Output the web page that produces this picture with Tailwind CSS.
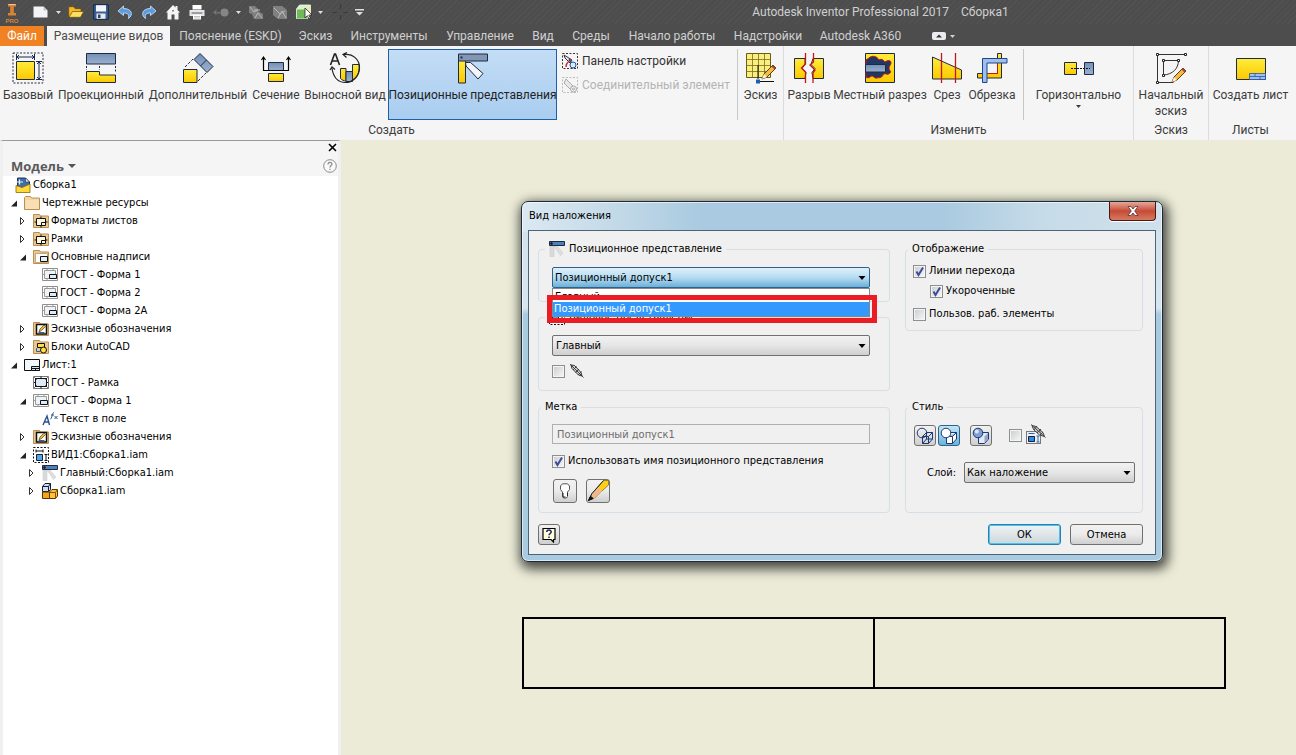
<!DOCTYPE html>
<html lang="ru">
<head>
<meta charset="utf-8">
<title>Autodesk Inventor Professional 2017 Сборка1</title>
<script src="https://cdn.jsdelivr.net/npm/@tailwindcss/browser@4"></script>
</head>
<body class="flex h-screen flex-col overflow-hidden bg-[#ebebd7] font-['Roboto','Open_Sans',sans-serif] text-[12px] leading-4 text-[#3c3c3c]">

<!-- Shared icons -->
<svg class="absolute size-0" aria-hidden="true">
  <symbol id="i-folder" viewBox="0 0 16 16"><path d="M.5 14.500V2.500l1-1h5l1 1.500h8v11.500z" fill="#f3d6a2" stroke="#b98f52"/><path d="M1.500 5h13.500v9H1.500z" fill="#f8e0b4"/></symbol>
  <symbol id="i-folder-frame" viewBox="0 0 16 16"><path d="M.5 14.500V1.500h6l1 1.500h8v11.500z" fill="#e9c890" stroke="#b98f52"/><path d="M3.500 5.500h9v7h-9z" fill="#fff6df" stroke="#111"/><path d="M1.500 9h2M12.500 9h2M8 3.500v2M8 12.500v2M8.500 9.500h4M8.500 9.500v3" stroke="#111" fill="none"/></symbol>
  <symbol id="i-folder-title" viewBox="0 0 16 16"><path d="M.5 14.500V1.500h6l1 1.500h8v11.500z" fill="#e9c890" stroke="#b98f52"/><path d="M2.500 4.500h12v9h-12z" fill="#fff"  stroke="#c3a87a"/><path d="M7.500 7.500h7v5h-7z" fill="#e5effa" stroke="#111"/></symbol>
  <symbol id="i-title" viewBox="0 0 16 16"><path d="M.5 1.500h15v12H.5z" fill="#fff" stroke="#8f8f8f"/><path d="M2.500 3.500h11v8h-11zM5 1.500v2M11 1.500v2M.5 7.500h2M5 11.500v2" fill="#eef3f8" stroke="#9a9a9a"/><path d="M7.500 7.500h7v4h-7z" fill="#dceafa" stroke="#111"/></symbol>
  <symbol id="i-frame" viewBox="0 0 16 16"><path d="M.5 1.500h15v12H.5z" fill="#fff" stroke="#777"/><path d="M2.500 3.500h11v8h-11z" fill="#dceaf8" stroke="#111"/><path d="M8 1.500v2M8 11.500v2M1 7.500h2M13 7.500h2M1.500 2.500l2 2M14.500 2.500l-2 2M1.500 12.500l2-2M14.500 12.500l-2-2" stroke="#111" fill="none"/></symbol>
  <symbol id="i-folder-sketch" viewBox="0 0 16 16"><path d="M.5 14.500V1.500h6l1 1.500h8v11.500z" fill="#e9c890" stroke="#b98f52"/><path d="M3.500 3.500v9.500h10V3.500z" fill="#fff" stroke="#111" stroke-width="1.500"/><path d="M6 11l1-3 4-4 1.500 1.500-4 4z" fill="#f2b82e" stroke="#5a4310" stroke-width=".7"/><path d="M5.500 11.500h6" stroke="#2d62a8"/></symbol>
  <symbol id="i-folder-acad" viewBox="0 0 16 16"><path d="M.5 14.500V1.500h6l1 1.500h8v11.500z" fill="#e9c890" stroke="#b98f52"/><path d="M4.500 4.500h7v4h-7z" fill="#ffe04a" stroke="#111"/><circle cx="10.500" cy="11" r="3" fill="#ffe04a" stroke="#111"/><path d="M3.500 9v3.500h4" fill="none" stroke="#2d62a8"/></symbol>
  <symbol id="i-sheet" viewBox="0 0 16 16"><path d="M.5 2.500h15v11H.5z" fill="#f2f7fd" stroke="#111"/><path d="M7.500 9.500h8v4h-8zM7.500 11.500h8M11.500 11.500v2" fill="#cfe0f2" stroke="#111"/></symbol>
  <symbol id="i-text" viewBox="0 0 16 16"><path d="M1 14l4-9 2.500 9M2.500 11h4.500" fill="none" stroke="#28508c" stroke-width="1.400"/><path d="M8.500 8c1.500 0 1.500-6.500 3.500-6.500M9 4h3M12.500 5l3 3M15.500 5l-3 3" fill="none" stroke="#28508c"/></symbol>
  <symbol id="i-view" viewBox="0 0 16 16"><path d="M.5 .5h15v15H.5z" fill="#fff" stroke="#111" stroke-dasharray="2 1.500"/><path d="M3.500 7.500h6v6h-6z" fill="#58a2e8" stroke="#123"/><path d="M3 2.500v3M10 2.500v3M3 4h7M11.500 7.500h3M11.500 13.500h3M13 7.500v6" fill="none" stroke="#111"/></symbol>
  <symbol id="i-pos" viewBox="0 0 16 16"><path d="M1 5h4v10.500H1z" fill="#dadada" stroke="#c4c4c4" stroke-width=".5"/><path d="M5 5h3l6 7-2.500 2.500z" fill="#dedede" stroke="#c4c4c4" stroke-width=".5"/><path d="M.5 .5h15v4H.5z" fill="#4f7fb5" stroke="#182a44"/><circle cx="2.500" cy="2.500" r="1.200" fill="#111"/></symbol>
  <symbol id="i-asm" viewBox="0 0 16 16"><path d="M.5 3.500l2.500-3h5.500v6l-2 2h-6z" fill="#cfe0f4" stroke="#111c33"/><path d="M.5 3.500h6l2-3M6.500 3.500v5" stroke="#111c33" fill="none"/><path d="M.5 9h7v6.500h-7z" fill="#f4a51c" stroke="#5a3300"/><path d="M7.500 9l2.500-2.500h5.500V13l-2 2.500h-6z" fill="#ffc33c" stroke="#5a3300"/><path d="M7.500 9.500h6l2-3M13.500 9.500v6" fill="none" stroke="#8a5200"/></symbol>
  <symbol id="i-link" viewBox="0 0 16 16"><path d="M2 2l3.500.5L12 9.500l1 3.500-3.500-1L3 5.500z" fill="#bbb" fill-opacity=".5" stroke="#333"/><path d="M1 1l13.500 13.500M4 7l3.500-3.500M6.500 9.500L10 6M9 12l3.500-3.500" stroke="#333" stroke-width=".9"/></symbol>
  <symbol id="i-caret" viewBox="0 0 5 3"><path d="M0 0h5L2.500 3z" fill="currentColor"/></symbol>
  <symbol id="i-drop" viewBox="0 0 8 5"><path d="M.5 0h7L4 4z" fill="#000"/></symbol>
  <symbol id="i-closed" viewBox="0 0 8 10"><path d="M1.500 1.500v7l3.500-3.500z" fill="#fff" stroke="#333"/></symbol>
  <symbol id="i-open" viewBox="0 0 8 10"><path d="M7 2.500v6H1z" fill="#222"/></symbol>
  <linearGradient id="gy" x2="0" y2="1"><stop stop-color="#ffec3c"/><stop offset="1" stop-color="#fcc800"/></linearGradient>
  <linearGradient id="gb" x2="0" y2="1"><stop stop-color="#7190b8"/><stop offset="1" stop-color="#9db0cc"/></linearGradient>
</svg>

<header class="shrink-0 bg-[#4d4d4d] text-[#d0d0d0]">
  <!-- Title bar with quick access tools -->
  <div class="flex h-6 items-center bg-[repeating-linear-gradient(135deg,#4d4d4d_0px,#4d4d4d_3px,#525252_3px,#525252_4px)]">
    <button aria-label="Меню приложения" class="w-[31px] pl-1"><svg class="h-[22px] w-4" viewBox="0 0 16 22"><path d="M4 3h8v2.500H9.800v6.500H12v2.500H4V12h2.200V5.500H4z" fill="#d98434"/><path d="M4 3h8l-1 1H5z" fill="#f7c48c"/><text x="8" y="21.500" text-anchor="middle" font-family="Liberation Sans" font-size="6" font-weight="700" fill="#d98434">PRO</text></svg></button>
    <button aria-label="Создать" class="w-[23px] pl-px"><svg class="size-4" viewBox="0 0 16 16"><path d="M1.500 2.500h10l4 4v7h-14z" fill="#f4f4f6"/><path d="M11.500 2.500v4h4z" fill="#bfc1c8"/></svg></button>
    <button aria-label="Список" class="w-[14px] pl-0.5 text-[#e0e0e0]"><svg class="h-[3px] w-[5px]"><use href="#i-caret"/></svg></button>
    <button aria-label="Открыть" class="w-[25px]"><svg class="size-4" viewBox="0 0 16 16"><path d="M.7 13V2.700h5l1.500 2H13v3" fill="#f4b926" stroke="#6a4b0a" stroke-width=".7"/><path d="M1 13.300l3.500-5.800h11.200L12.500 13.300z" fill="#ffdf62" stroke="#6a4b0a" stroke-width=".7"/></svg></button>
    <button aria-label="Сохранить" class="w-[24px]"><svg class="size-4" viewBox="0 0 16 16"><path d="M.7.700h14.600v14.600H.7z" fill="#3c5f92" stroke="#12294c"/><path d="M3 1.200h10v6.300H3z" fill="#f3f5fa"/><path d="M3.500 9.500h9v5.300h-9z" fill="#e9e9ee"/><path d="M5 10.500h2.500v3.500H5z" fill="#26426e"/></svg></button>
    <button aria-label="Отменить" class="w-[24px]"><svg class="size-4" viewBox="0 0 16 16"><path d="M6.500 2L1 7l5.500 4.500V9c4 0 6 1 5 5.500 5-3.500 3.500-10-5-10z" fill="#5b9be0" stroke="#d6e8fc" stroke-width=".8"/></svg></button>
    <button aria-label="Повторить" class="w-[24px]"><svg class="size-4" viewBox="0 0 16 16"><path d="M9.500 2L15 7l-5.500 4.500V9c-4 0-6 1-5 5.500-5-3.500-3.500-10 5-10z" fill="#5b9be0" stroke="#d6e8fc" stroke-width=".8"/></svg></button>
    <button aria-label="Главная" class="w-[24px]"><svg class="size-4" viewBox="0 0 16 16"><path d="M8 1L1 8.500h1.500V15.500h4v-5h3v5h4V8.500H15L12.500 6V2h-2v1.500z" fill="#f5f5f7"/><path d="M7 6h2v1.500H7z" fill="#888"/></svg></button>
    <button aria-label="Печать" class="w-[24px]"><svg class="size-4" viewBox="0 0 16 16"><path d="M3.500 1h9v4.500h-9z" fill="#fff"/><path d="M.5 6h15v6h-15z" fill="#e7e7ea"/><path d="M2.500 8.500h11v1h-11z" fill="#55555a"/><path d="M4 11h8v4.500H4z" fill="#fff"/><path d="M5 12.500h6M5 14h6" stroke="#999" stroke-width=".6"/></svg></button>
    <button aria-label="Назад" class="w-[22px]"><svg class="size-4" viewBox="0 0 16 16"><path d="M0 8.500l3.500-3V11zM4 8h3v1.500H4z" fill="#757575"/><circle cx="11.500" cy="8.500" r="4" fill="#858585"/></svg></button>
    <button aria-label="Список" class="w-[13px] pl-px text-[#e0e0e0]"><svg class="h-[3px] w-[5px]"><use href="#i-caret"/></svg></button>
    <button aria-label="Обновить" class="w-[24px]"><svg class="size-4" viewBox="0 0 16 16"><path d="M1 2h6l3 3v2l5 3v5H6l-2-5-3-1z" fill="#808080"/><path d="M2 3l4 5 4-2M7 14l3-5 4 5M6 6h6" fill="none" stroke="#b8b8b8"/></svg></button>
    <button aria-label="Обновить все" class="w-[24px]"><svg class="size-4" viewBox="0 0 16 16"><path d="M1 2h9l5 4v9H6l-5-4z" fill="#808080"/><path d="M2 4l6 6 5-3M6 14l4-7 4 7" fill="none" stroke="#b8b8b8"/></svg></button>
    <button aria-label="Выбор" class="w-[21px]"><svg class="size-4" viewBox="0 0 16 16"><path d="M.5 5l3-4h11v9.500l-3 4H.5z" fill="#d9f2c8" stroke="#f0f8ea" stroke-width=".8"/><path d="M1 5.500h10v9H1z" fill="#6fbb58"/><path d="M11.500 5v9.500l3-4V1z" fill="#f0e6b0"/><path d="M9 4v10l2.300-2.300L13 15l1.500-.7-1.700-3.300H16z" fill="#fff" stroke="#111" stroke-width=".7"/></svg></button>
    <button aria-label="Список" class="w-[15px] pl-px text-[#e0e0e0]"><svg class="h-[3px] w-[5px]"><use href="#i-caret"/></svg></button>
    <button aria-label="Центр" class="w-[23px]"><svg class="size-4" viewBox="0 0 16 16"><path d="M0 8.500h5M11 8.500h5M8.500 0v5M8.500 11v5" stroke="#3a3a3a" stroke-width="1.200"/></svg></button>
    <button aria-label="Настройка панели" class="w-[10px] text-[#e0e0e0]"><svg class="h-[7px] w-[9px]" viewBox="0 0 9 7"><path d="M0 0h9v1.500H0zM1 3h7L4.500 6.500z" fill="currentColor"/></svg></button>
    <h1 class="flex flex-1 justify-center gap-3 whitespace-nowrap pl-[100px]"><span>Autodesk Inventor Professional 2017</span><span>Сборка1</span></h1>
  </div>
  <!-- Ribbon tabs -->
  <nav class="flex h-[22px] items-end whitespace-nowrap *:h-5 *:leading-5">
    <button class="mr-[3px] w-11 bg-[#f08223] text-white">Файл</button>
    <button class="mr-px w-[123px] bg-[#f5f5f5] text-[#4a4a4a]">Размещение видов</button>
    <button class="w-[119px]">Пояснение (ESKD)</button>
    <button class="w-[51px]">Эскиз</button>
    <button class="w-[96px]">Инструменты</button>
    <button class="w-[86px]">Управление</button>
    <button class="w-[40px]">Вид</button>
    <button class="w-[56px]">Среды</button>
    <button class="w-[106px]">Начало работы</button>
    <button class="w-[86px]">Надстройки</button>
    <button class="w-[99px]">Autodesk A360</button>
    <button aria-label="Свернуть ленту" class="flex items-center gap-1 pl-[22px]"><svg class="h-2 w-[14px]" viewBox="0 0 14 8"><rect width="14" height="8" rx="2" fill="#ececf0"/><path d="M4 5.500h6L7 2.500z" fill="#333"/></svg><svg class="h-[3px] w-[5px]"><use href="#i-caret"/></svg></button>
  </nav>
</header>

<!-- Ribbon -->
<section class="flex h-[94px] shrink-0 whitespace-nowrap bg-[#f5f5f5]">
  <div class="flex w-[784px] shrink-0 flex-col border-r border-[#dcdcdc] pt-[3px]">
    <div class="flex h-[72px] *:shrink-0">
      <button class="flex w-14 flex-col items-center gap-[3px] pt-[3px]"><svg class="size-8" viewBox="0 0 32 32"><path d="M1 1h30v30H1z" fill="none" stroke="#222c40" stroke-dasharray="2 1.500"/><path d="M4.500 9.500h18v18h-18z" fill="url(#gy)" stroke="#1c2b45"/><path d="M4.500 2v6M22.500 2v6M5 5h17M24 9.500h6M24 27.500h6M27 10v17M7 3L5 5l2 2M20 3l2 2-2 2M25 12l2-2 2 2M25 25l2 2 2-2" fill="none" stroke="#1c2b45"/></svg>Базовый</button>
      <button class="flex w-[90px] flex-col items-center gap-[3px] pt-[3px]"><svg class="size-8" viewBox="0 0 32 32"><path d="M1.500 1.500h29v10.500h-29z" fill="url(#gb)" stroke="#1c2b45"/><path d="M1.500 14v4M14.500 14v4M30.500 14v6" stroke="#1c2b45" stroke-dasharray="2 1.500"/><path d="M1.500 19.500h13V23h16v7.500h-29z" fill="url(#gy)" stroke="#1c2b45"/></svg>Проекционный</button>
      <button class="flex w-[104px] flex-col items-center gap-[3px] pt-[3px]"><svg class="size-8" viewBox="0 0 32 32"><path d="M18 1.500l13 13-6 6-13-13z" fill="url(#gb)" stroke="#1c2b45"/><path d="M24.500 8l-6 6" stroke="#1c2b45"/><path d="M3 15L11 7M16 29l8-8" stroke="#1c2b45" stroke-dasharray="3 1.500"/><path d="M1.500 17.500h13.500v13H1.500z" fill="url(#gy)" stroke="#1c2b45"/></svg>Дополнительный</button>
      <button class="flex w-[52px] flex-col items-center gap-[3px] pt-[3px]"><svg class="size-8" viewBox="0 0 32 32"><path d="M8.500 10.500h15v8h-15z" fill="url(#gb)" stroke="#1c2b45"/><path d="M8.500 21.500h15v8h-15z" fill="url(#gy)" stroke="#1c2b45"/><path d="M3.500 6v12.500h25V6M1.500 8l2-3 2 3M26.500 8l2-3 2 3" fill="none" stroke="#000" stroke-width="1.200"/></svg>Сечение</button>
      <button class="flex w-[86px] flex-col items-center gap-[3px] pt-[3px]"><svg class="size-8" viewBox="0 0 32 32"><path d="M11.500 16.500h5.500v12.500c-2 0-4-1-5.500-2.500zM23.500 12.500h6.500c1 8-2 13-6.500 15.500z" fill="url(#gy)" stroke="#1c2b45"/><path d="M17 19.500h6.500v10H17z" fill="url(#gb)" stroke="#1c2b45"/><path d="M1.500 13L5.500 2h1l4 11M3 9h6" fill="none" stroke="#222" stroke-width="1.600"/><path d="M15 2.500c9-1 15.500 5 15.500 13 0 10-8 15-14 15-7 0-12-5-13.500-14M18 .5l-4 2 3.500 3M1 18l2-3 3 2.500" fill="none" stroke="#222" stroke-width="1.200"/></svg>Выносной вид</button>
      <button class="flex w-[169px] flex-col items-center gap-[3px] border border-[#1e5fa8] bg-linear-to-b from-[#c3ddf5] to-[#a9cdf0] pt-[2px] text-[#222]"><svg class="size-8" viewBox="0 0 32 32"><path d="M1.500 8.500h7V31h-7z" fill="url(#gy)" stroke="#1c2b45"/><path d="M8.500 10.500h5L26 21.500 21 27 9 14z" fill="#f2f4f9" stroke="#1c2b45"/><path d="M1.500 2h29v7h-29z" fill="#8397b5" stroke="#1c2b45"/><path d="M3.500 4.500h2v2h-2z" fill="#1c2b45"/></svg>Позиционные представления</button>
      <div class="flex w-[180px] flex-col gap-2 pl-[5px] pt-1">
        <button class="flex items-center gap-1 text-[#333]"><svg class="size-4 shrink-0" viewBox="0 0 16 16"><path d="M.5.500h15v15H.5z" fill="none" stroke="#333" stroke-dasharray="2 1.500"/><path d="M2 2l8 5-2 3-5-5z" fill="#eee" stroke="#333"/><path d="M4 14c0-5 3-5 5-8" fill="none" stroke="#d02828" stroke-width="1.400"/><path d="M7 6l4 7" stroke="#1c4f9c" stroke-width="1.400"/><circle cx="11" cy="12" r="3" fill="#dce9f8" stroke="#1c4f9c"/></svg>Панель настройки</button>
        <button disabled class="flex items-center gap-1 text-[#b4b4b4]"><svg class="size-4 shrink-0" viewBox="0 0 16 16"><path d="M.5.500h15v15H.5z" fill="none" stroke="#bbb" stroke-dasharray="2 1.500"/><path d="M4 2l7 7-3 3-6-6z" fill="#e8e8e8" stroke="#aaa"/><circle cx="11.500" cy="12" r="3" fill="#f3f3f3" stroke="#aaa"/><circle cx="11.500" cy="12" r="1" fill="none" stroke="#aaa"/></svg>Соединительный элемент</button>
      </div>
      <button class="flex w-[46px] flex-col items-center gap-[3px] border-l border-[#c8c8c8] pt-[3px]"><svg class="size-8" viewBox="0 0 32 32"><path d="M1.500 1.500h24v24h-24z" fill="#f9ee7e" stroke="#6b5d14"/><path d="M1.500 7.500h24M1.500 13.500h24M1.500 19.500h24M7.500 1.500v24M13.500 1.500v24M19.500 1.500v24" stroke="#7a6b20" stroke-width=".8"/><path d="M13 13v14M13 29.500h16" stroke="#111"/><path d="M11 27.500h4v4h-4z" fill="#1b5fb5"/><path d="M17 27l2-5 9-9 3 3-9 9z" fill="#f3bb42" stroke="#5c3c0c"/><path d="M17 27l2-5 3 3z" fill="#fff5e0"/><path d="M26.500 14.500l1.500-1.500 3 3-1.500 1.500z" fill="#a54632"/></svg>Эскиз</button>
    </div>
    <div class="text-center leading-5">Создать</div>
  </div>
  <div class="flex w-[350px] shrink-0 flex-col border-r border-[#dcdcdc] pt-[3px]">
    <div class="flex h-[72px] *:shrink-0">
      <button class="flex w-[50px] flex-col items-center gap-[3px] pt-[3px]"><svg class="size-8" viewBox="0 0 32 32"><path d="M1.500 6.500H12v6l-3 4 4 4-1 6H1.500zM20 6.500h10.500v20H20l-1-6 3-4-4-4z" fill="url(#gy)" stroke="#1c2b45"/><path d="M12.500 1v11l-4 4 4 4v11M20.500 1v9l-3.500 3 5 5-2 3v10" fill="none" stroke="#c4161c" stroke-width="1.300"/></svg>Разрыв</button>
      <button class="flex w-[92px] flex-col items-center gap-[3px] pt-[3px]"><svg class="size-8" viewBox="0 0 32 32"><path d="M1.500 1.500h29v29h-29z" fill="url(#gy)" stroke="#1c2b45"/><path d="M2 8l3-2c3-3 8-2 10 2 3-2 5 1 6 2 3-2 6-2 6 1 0 2-2 3-2 5 0 3 3 3 1 5-3 3-5-1-7 2-2 4-4 2-6 3-3 1-4-4-7-1-1 1-3 1-4 0z" fill="#213862" stroke="#c4161c"/><path d="M1.500 12.500h20v7.500h-20z" fill="url(#gb)" stroke="#1c2b45"/></svg>Местный разрез</button>
      <button class="flex w-[42px] flex-col items-center gap-[3px] pt-[3px]"><svg class="size-8" viewBox="0 0 32 32"><path d="M1.500 5l29 13v9h-29z" fill="url(#gy)" stroke="#1c2b45"/><path d="M10.500 1v30M24.500 1v30" stroke="#c4161c" stroke-width="1.300"/></svg>Срез</button>
      <button class="flex w-[48px] flex-col items-center gap-[3px] pt-[3px]"><svg class="size-8" viewBox="0 0 32 32"><path d="M21.500 1.500h4V26h-24v-4.500h20z" fill="url(#gy)" stroke="#1c2b45"/><path d="M11 21.500h10.500V11" fill="none" stroke="#c4161c"/><path d="M6.500 30.500v-24h24.500v4.500H11v19.500z" fill="#9dc0f0" stroke="#1f448a"/></svg>Обрезка</button>
      <div class="ml-[7px] w-[110px] border-l border-[#c8c8c8]"><button class="flex h-full w-full flex-col items-center pt-[3px]"><svg class="size-8" viewBox="0 0 32 32"><path d="M1.500 10.500h12v12h-12z" fill="url(#gy)" stroke="#1c2b45"/><path d="M21.500 10.500h9v12h-9z" fill="url(#gb)" stroke="#1c2b45"/><path d="M8 16.500h19" stroke="#111" stroke-dasharray="2 1"/></svg><span class="mt-[3px]">Горизонтально</span><svg class="mt-[2px] h-[3px] w-[5px]"><use href="#i-caret"/></svg></button></div>
    </div>
    <div class="text-center leading-5">Изменить</div>
  </div>
  <div class="flex w-[75px] shrink-0 flex-col border-r border-[#dcdcdc] pt-[3px]">
    <button class="flex h-[72px] flex-col items-center gap-[3px] pt-[3px]"><svg class="size-8 shrink-0" viewBox="0 0 32 32"><path d="M2.500 30.500v-28h28M2.500 30.500h16" fill="none" stroke="#333"/><path d="M8.500 8.500h15c0 8-6 14-15 14.500z" fill="none" stroke="#333"/><path d="M1.500 1.500h2v2h-2zM29.500 1.500h2v2h-2zM1.500 29.500h2v2h-2zM7.500 7.500h2v2h-2zM22.500 7.500h2v2h-2zM7.500 22.500h2v2h-2z" fill="#fff" stroke="#222"/><path d="M17 30l2-5 9-9 3 3-9 9z" fill="#f3bb42" stroke="#5c3c0c"/><path d="M17 30l2-5 3 3z" fill="#fff5e0"/><path d="M26.500 17.500l1.500-1.500 3 3-1.500 1.500z" fill="#a54632"/></svg><span>Начальный<br>эскиз</span></button>
    <div class="text-center leading-5">Эскиз</div>
  </div>
  <div class="flex w-[83px] shrink-0 flex-col pt-[3px]">
    <button class="flex h-[72px] flex-col items-center gap-[3px] pt-[3px]"><svg class="size-8" viewBox="0 0 32 32"><path d="M1.500 6.500h29v21h-29z" fill="url(#gy)" stroke="#1c2b45"/><path d="M14.500 21.500h16v6h-16zM14.500 24.500h16M20 21.500v3M25 24.500v3" fill="#9dc0f0" stroke="#2a54a0" stroke-width=".8"/></svg>Создать лист</button>
    <div class="text-center leading-5">Листы</div>
  </div>
</section>

<main class="flex min-h-0 flex-1 font-['DejaVu_Sans_Condensed','DejaVu_Sans',sans-serif] text-[11px] text-black">
  <!-- Model browser -->
  <aside class="w-[341px] shrink-0 border-x-3 border-t border-x-[#f0f0f0] border-t-[#999] bg-white">
    <div class="flex h-[35px] flex-col bg-[#f5f5f5] pr-px">
      <button aria-label="Закрыть панель" class="flex h-[13px] items-center self-end"><svg class="size-[9px]" viewBox="0 0 9 9"><path d="M1 1l7 7M8 1L1 8" stroke="#000" stroke-width="1.600"/></svg></button>
      <div class="flex h-[22px] items-center justify-between pl-2 pt-0.5">
        <button class="flex items-center gap-1 font-['Open_Sans',sans-serif] text-[13px] font-bold text-[#5a5a5a]">Модель<svg class="h-1 w-2" viewBox="0 0 8 4"><path d="M0 0h8L4 4z" fill="#555"/></svg></button>
        <button aria-label="Справка"><svg class="size-[14px]" viewBox="0 0 14 14"><circle cx="7" cy="7" r="6.300" fill="#fafafa" stroke="#8a8a8a"/><path d="M5 5.500c0-2.800 4-2.800 4-.4C9 6.600 7 6.600 7 8.400M7 9.700v1.300" fill="none" stroke="#8a8a8a" stroke-width="1.200"/></svg></button>
      </div>
    </div>
    <ul class="whitespace-nowrap *:flex *:h-[18px] *:items-center *:gap-[2px]">
      <li class="pl-3"><svg class="size-4" viewBox="0 0 16 16"><path d="M2.500 1h8l4 4v6H2.500z" fill="#3f6ea8" stroke="#16335c"/><path d="M10.500 1v4h4z" fill="#e8f0fa" stroke="#16335c" stroke-width=".6"/><path d="M1 8.500l6 2 8-3.500v8.500H1z" fill="#ffd83a" stroke="#8a6a00" stroke-width=".8"/><path d="M1 5h7M4.500 2.500v5" stroke="#e8f0fa" stroke-width="1.200"/></svg>Сборка1</li>
      <li class="pl-[7px]"><svg class="mr-1 h-[10px] w-2"><use href="#i-open"/></svg><svg class="size-4"><use href="#i-folder"/></svg>Чертежные ресурсы</li>
      <li class="pl-4"><svg class="mr-1 h-[10px] w-2"><use href="#i-closed"/></svg><svg class="size-4"><use href="#i-folder-frame"/></svg>Форматы листов</li>
      <li class="pl-4"><svg class="mr-1 h-[10px] w-2"><use href="#i-closed"/></svg><svg class="size-4"><use href="#i-folder-frame"/></svg>Рамки</li>
      <li class="pl-4"><svg class="mr-1 h-[10px] w-2"><use href="#i-open"/></svg><svg class="size-4"><use href="#i-folder-title"/></svg>Основные надписи</li>
      <li class="pl-[39px]"><svg class="size-4"><use href="#i-title"/></svg>ГОСТ - Форма 1</li>
      <li class="pl-[39px]"><svg class="size-4"><use href="#i-title"/></svg>ГОСТ - Форма 2</li>
      <li class="pl-[39px]"><svg class="size-4"><use href="#i-title"/></svg>ГОСТ - Форма 2А</li>
      <li class="pl-4"><svg class="mr-1 h-[10px] w-2"><use href="#i-closed"/></svg><svg class="size-4"><use href="#i-folder-sketch"/></svg>Эскизные обозначения</li>
      <li class="pl-4"><svg class="mr-1 h-[10px] w-2"><use href="#i-closed"/></svg><svg class="size-4"><use href="#i-folder-acad"/></svg>Блоки AutoCAD</li>
      <li class="pl-[7px]"><svg class="mr-1 h-[10px] w-2"><use href="#i-open"/></svg><svg class="size-4"><use href="#i-sheet"/></svg>Лист:1</li>
      <li class="pl-[30px]"><svg class="size-4"><use href="#i-frame"/></svg>ГОСТ - Рамка</li>
      <li class="pl-4"><svg class="mr-1 h-[10px] w-2"><use href="#i-open"/></svg><svg class="size-4"><use href="#i-title"/></svg>ГОСТ - Форма 1</li>
      <li class="pl-[39px]"><svg class="size-4"><use href="#i-text"/></svg>Текст в поле</li>
      <li class="pl-4"><svg class="mr-1 h-[10px] w-2"><use href="#i-closed"/></svg><svg class="size-4"><use href="#i-folder-sketch"/></svg>Эскизные обозначения</li>
      <li class="pl-4"><svg class="mr-1 h-[10px] w-2"><use href="#i-open"/></svg><svg class="size-4"><use href="#i-view"/></svg>ВИД1:Сборка1.iam</li>
      <li class="pl-[25px]"><svg class="mr-1 h-[10px] w-2"><use href="#i-closed"/></svg><svg class="size-4"><use href="#i-pos"/></svg>Главный:Сборка1.iam</li>
      <li class="pl-[25px]"><svg class="mr-1 h-[10px] w-2"><use href="#i-closed"/></svg><svg class="size-4"><use href="#i-asm"/></svg>Сборка1.iam</li>
    </ul>
  </aside>

  <!-- Drawing canvas -->
  <div class="relative flex-1 bg-[#ebebd7]">
    <div class="absolute left-[181px] top-[477px] flex h-[72px] w-[704px] border-2 border-black"><div class="flex-1 border-r-2 border-black"></div><div class="flex-1"></div></div>

    <!-- Overlay view dialog -->
    <section role="dialog" aria-labelledby="dlg-title" class="absolute left-[180px] top-[61px] w-[642px] rounded-[7px] border border-[#1d2b38] bg-[linear-gradient(180deg,transparent_30px,#d3e3ee_30px,#d6e6f0_106px,#a9cbe2_112px),linear-gradient(90deg,#dbe9f2_0px,#c4dae8_90px,#a9cae0_180px,#a9cae0_420px,#c6dbe8_520px,#cfe1ec_100%)] px-[6px] pb-[6px] shadow-[inset_0_0_0_1px_rgba(255,255,255,0.6),2px_4px_12px_3px_rgba(0,0,0,0.7)]">
      <header class="flex h-7 justify-between">
        <h2 id="dlg-title" class="pl-px text-[11px] leading-7">Вид наложения</h2>
        <button aria-label="Закрыть" class="flex h-[19px] w-[47px] items-center justify-center rounded-b-[4px] border border-t-0 border-[#4a1712] bg-linear-to-b from-[#e3a79b] via-[#c64a35] via-50% to-[#d47a62] shadow-[0_1px_0_#fff]"><svg class="h-[10px] w-3" viewBox="0 0 12 10"><path d="M1 .5h3l2 2.500L8 .5h3L7.700 5 11 9.500H8L6 7 4 9.500H1L4.300 5z" fill="#fff" stroke="#5d2f35" stroke-width=".8"/></svg></button>
      </header>
      <div class="border border-[#4d6478] bg-[#f0f0f0] pb-[9px] pl-[9px] pr-3 pt-[10px]">
        <div class="grid grid-cols-[352fr_238fr] gap-x-[15px] gap-y-2">
          <div class="flex flex-col gap-[7px]">
            <fieldset class="relative h-[61px] rounded-[4px] border border-[#d5dfe5] px-[2px]">
              <legend class="ml-1 flex h-4 items-center gap-1 px-1"><svg class="size-4"><use href="#i-pos"/></svg>Позиционное представление</legend>
              <div class="relative ml-[11px] mr-[17px] mt-[10px]">
                <select aria-label="Позиционное представление" class="block h-[21px] w-full appearance-none rounded-[2px] border border-[#2c628b] bg-linear-to-b from-[#dff0fa] via-[#b5dcf2] via-50% to-[#6cb0d8] pl-[2px]"><option>Позиционный допуск1</option></select>
                <svg class="pointer-events-none absolute right-1 top-[9px] h-[5px] w-2"><use href="#i-drop"/></svg>
                <ul role="listbox" aria-label="Варианты представления" class="absolute inset-x-0 top-[21px] z-10 border border-[#888] bg-white"><li role="option" aria-selected="false" class="h-[13px] pl-0.5 leading-4">Главный</li><li role="option" aria-selected="true" class="h-[14px] bg-[#3399ff] pl-px leading-[14px] text-white">Позиционный допуск1</li></ul>
                <div class="absolute -left-[5px] -right-[7px] top-7 z-20 h-7 border-5 border-[#ec1c24]"></div>
              </div>
            </fieldset>
            <fieldset class="h-[82px] rounded-[4px] border border-[#d5dfe5] px-[2px]">
              <legend class="ml-1 flex h-4 items-center gap-1 px-1"><svg class="size-4"><use href="#i-view"/></svg>Видовое представление</legend>
              <div class="ml-[11px] mr-[17px] mt-[10px]">
                <div class="relative">
                  <select aria-label="Видовое представление" class="block h-[21px] w-full appearance-none rounded-[2px] border border-[#707070] bg-linear-to-b from-[#f2f2f2] via-[#e6e6e6] via-50% to-[#cfcfcf] pl-[3px]"><option>Главный</option></select>
                  <svg class="pointer-events-none absolute right-1 top-[9px] h-[5px] w-2"><use href="#i-drop"/></svg>
                </div>
                <label class="mt-[7px] flex items-center gap-1"><input type="checkbox" aria-label="Ассоциативный" class="size-[13px] appearance-none border border-[#8e8f8f] bg-linear-to-br from-[#c9ccd0] to-[#f8f8f8] shadow-[inset_0_0_0_1px_#f4f4f4]"><svg class="size-4"><use href="#i-link"/></svg></label>
              </div>
            </fieldset>
          </div>
          <fieldset class="h-[90px] self-start rounded-[4px] border border-[#d5dfe5] px-[2px]">
            <legend class="h-4 px-1">Отображение</legend>
            <div class="ml-[5px] mt-[6px] flex flex-col">
              <label class="flex h-4 items-center gap-[3px]"><span class="relative flex"><input type="checkbox" checked class="size-[13px] appearance-none border border-[#8e8f8f] bg-linear-to-br from-[#c9ccd0] to-[#f8f8f8] shadow-[inset_0_0_0_1px_#f4f4f4]"><svg class="pointer-events-none absolute inset-0 size-[13px]" viewBox="0 0 13 13"><path d="M3.500 6.500l2 3.500 4.500-7.500" fill="none" stroke="#3c4d96" stroke-width="2"/></svg></span>Линии перехода</label>
              <label class="ml-[17px] mt-1 flex h-4 items-center gap-[3px]"><span class="relative flex"><input type="checkbox" checked class="size-[13px] appearance-none border border-[#8e8f8f] bg-linear-to-br from-[#c9ccd0] to-[#f8f8f8] shadow-[inset_0_0_0_1px_#f4f4f4]"><svg class="pointer-events-none absolute inset-0 size-[13px]" viewBox="0 0 13 13"><path d="M3.500 6.500l2 3.500 4.500-7.500" fill="none" stroke="#3c4d96" stroke-width="2"/></svg></span>Укороченные</label>
              <label class="mt-[7px] flex h-4 items-center gap-[3px]"><input type="checkbox" class="size-[13px] appearance-none border border-[#8e8f8f] bg-linear-to-br from-[#c9ccd0] to-[#f8f8f8] shadow-[inset_0_0_0_1px_#f4f4f4]">Пользов. раб. элементы</label>
            </div>
          </fieldset>
          <fieldset class="h-[114px] rounded-[4px] border border-[#d5dfe5] px-[2px]">
            <legend class="h-4 px-1">Метка</legend>
            <div class="ml-[11px] mr-[17px] mt-[9px]">
              <input type="text" aria-label="Метка" disabled value="Позиционный допуск1" class="block h-5 w-full border border-[#afafaf] bg-[#f0f0f0] pl-1 text-[#6d6d6d]">
              <label class="mt-[9px] flex h-4 items-center gap-[3px]"><span class="relative flex"><input type="checkbox" checked class="size-[13px] appearance-none border border-[#8e8f8f] bg-linear-to-br from-[#c9ccd0] to-[#f8f8f8] shadow-[inset_0_0_0_1px_#f4f4f4]"><svg class="pointer-events-none absolute inset-0 size-[13px]" viewBox="0 0 13 13"><path d="M3.500 6.500l2 3.500 4.500-7.500" fill="none" stroke="#3c4d96" stroke-width="2"/></svg></span><span class="whitespace-nowrap">Использовать имя позиционного представления</span></label>
              <div class="ml-px mt-[10px] flex gap-[9px]">
                <button aria-label="Видимость" class="flex size-6 items-center justify-center rounded-[3px] border border-[#707070] bg-linear-to-b from-[#f2f2f2] via-[#ebebeb] to-[#cfcfcf]"><svg class="h-4 w-3" viewBox="0 0 12 16"><path d="M3.500 .8h5L10.500 3v3.500L8.500 9v4.500L7.500 15h-3L3.500 13.500V9l-2-2.500V3z" fill="#fff" stroke="#555"/><path d="M4 10v4h2.500M8.500 10v3" stroke="#222" fill="none"/></svg></button>
                <button aria-label="Редактировать" class="flex size-6 items-center justify-center rounded-[3px] border border-[#707070] bg-linear-to-b from-[#f2f2f2] via-[#ebebeb] to-[#cfcfcf]"><svg class="size-[22px]" viewBox="0 0 22 22"><path d="M1.500 20.500l3.500-7L16.500 .5h5V5L8 17.500z" fill="#ffcf16" stroke="#5a4000" stroke-width=".6"/><path d="M1.500 20.500l3.500-7 6-6.500 4 4.500-7 6z" fill="#f0b98a"/><path d="M1.500 20.500l3.500-7L16.500 .5" fill="none" stroke="#222"/><path d="M1.500 20.500l2-4.300 2.700 2.300z" fill="#111" stroke="#111"/></svg></button>
              </div>
            </div>
          </fieldset>
          <fieldset class="h-[114px] rounded-[4px] border border-[#d5dfe5] px-[2px]">
            <legend class="h-4 px-1">Стиль</legend>
            <div class="ml-[6px] mr-[5px] mt-[10px]">
              <div class="flex items-center">
                <button aria-label="Показать невидимые линии" class="mr-[2px] flex h-[21px] w-[22px] items-center justify-center rounded-[3px] border border-[#707070] bg-linear-to-b from-[#f2f2f2] to-[#cfcfcf]"><svg class="size-[18px]" viewBox="0 0 18 18"><path d="M6.500 9.500l4-4h6V12l-4 4.500h-6zM6.500 9.500h6l4-4M12.500 9.500v7M10.500 5.500V12h6M6.500 16.500l4-4.500" fill="none" stroke="#1c3872"/><circle cx="6" cy="6" r="4.800" fill="none" stroke="#1c3872"/></svg></button>
                <button aria-label="Удалить невидимые линии" class="mr-[10px] flex h-[21px] w-[22px] items-center justify-center rounded-[3px] border border-[#2c628b] bg-linear-to-b from-[#c4e5f6] to-[#68b3db]"><svg class="size-[18px]" viewBox="0 0 18 18"><path d="M6.500 9.500l4-4h6V12l-4 4.500h-6zM6.500 9.500h6l4-4M12.500 9.500v7" fill="#fff" stroke="#1c3872"/><circle cx="6" cy="6" r="4.800" fill="#fff" stroke="#1c3872"/></svg></button>
                <button aria-label="Тонированный" class="flex h-[21px] w-[22px] items-center justify-center rounded-[3px] border border-[#707070] bg-linear-to-b from-[#f2f2f2] to-[#cfcfcf]"><svg class="size-[18px]" viewBox="0 0 18 18"><path d="M6.500 9.500l4-4h6V12l-4 4.500h-6z" fill="#e3eaf6" stroke="#1c3872"/><path d="M12.500 9.500l3.500-3.500V12l-3.500 4z" fill="#8ea5cc"/><circle cx="6" cy="6" r="4.800" fill="#7f9fd4" stroke="#1c3872"/><circle cx="4.800" cy="4.500" r="2" fill="#dbe7f8"/></svg></button>
                <label class="ml-[17px] flex items-center gap-1"><input type="checkbox" aria-label="Стиль из базового вида" class="size-[13px] appearance-none border border-[#8e8f8f] bg-linear-to-br from-[#c9ccd0] to-[#f8f8f8] shadow-[inset_0_0_0_1px_#f4f4f4]"><svg class="-mt-1 h-5 w-5" viewBox="0 0 20 20"><path d="M.5 19.500v-12h14v12z" fill="none" stroke="#000" stroke-dasharray="1 1"/><path d="M2.500 12.500h6v5h-6z" fill="#2f8af0" stroke="#123"/><path d="M2.500 9.500h6M12 12v6M10.500 12h3M10.500 18h3" stroke="#2566b8"/><path d="M6 1.500l4 1 7 6 1.500 4-5-1.500-6-5.500zM5 .5l14.500 13M8 6l3-4M11 9l4-4M14 11l3-3" fill="#bbb" fill-opacity=".6" stroke="#444"/></svg></label>
              </div>
              <div class="mt-4 flex items-center justify-between pl-[13px]">
                <label for="layer">Слой:</label>
                <div class="relative w-[171px]">
                  <select id="layer" class="block h-[21px] w-full appearance-none rounded-[2px] border border-[#707070] bg-linear-to-b from-[#f2f2f2] via-[#e6e6e6] via-50% to-[#cfcfcf] pl-[2px]"><option>Как наложение</option></select>
                  <svg class="pointer-events-none absolute right-1 top-[9px] h-[5px] w-2"><use href="#i-drop"/></svg>
                </div>
              </div>
            </div>
          </fieldset>
        </div>
        <footer class="mt-[11px] flex gap-[9px]">
          <button aria-label="Справка" class="mr-auto flex h-[21px] w-[22px] items-center justify-center rounded-[3px] border border-[#707070] bg-linear-to-b from-[#f2f2f2] to-[#cfcfcf]"><svg class="size-4" viewBox="0 0 16 16"><path d="M2 1.500h12v11h-1.500v2.500L10 12.500H2z" fill="#ffffd8" stroke="#000" stroke-width="1.200"/><path d="M5.800 5c0-2.500 4.400-2.500 4.400-.2C10.200 6.500 8 6.500 8 8.300M8 9.500v1.500" fill="none" stroke="#1a2470" stroke-width="1.500"/></svg></button>
          <button class="h-[21px] w-[73px] rounded-[3px] border border-[#2a7fae] bg-linear-to-b from-[#eef3f6] to-[#cfd6da] shadow-[inset_0_0_0_1px_#48c4ee]">ОК</button>
          <button class="h-[21px] w-[73px] rounded-[3px] border border-[#707070] bg-linear-to-b from-[#f2f2f2] via-[#ebebeb] to-[#cfcfcf]">Отмена</button>
        </footer>
      </div>
    </section>
  </div>
</main>
</body>
</html>
